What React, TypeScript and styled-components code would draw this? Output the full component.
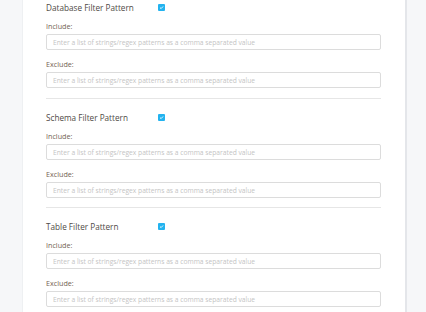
import React from "react";
import styled, { createGlobalStyle } from "styled-components";

const GlobalStyle = createGlobalStyle`
  html, body {
    margin: 0;
    padding: 0;
    background: #f6f7f9;
    font-family: "Open Sans", "Liberation Sans", sans-serif;
  }
`;

const Page = styled.div`
  display: flex;
  height: 312px;
  overflow: hidden;
`;

const Card = styled.div`
  margin-left: 22px;
  width: 335px;
  padding: 0 24px 0 23px;
  background: #ffffff;
  border-left: 1px solid #eef0f2;
  border-right: 2px solid #e4e6ea;
`;

const Section = styled.div`
  padding: 11px 0 9px;
  border-bottom: 1px solid #e6e6e6;

  &:first-child {
    padding-top: 0;
    padding-bottom: 10px;
  }
`;

const Header = styled.div`
  display: flex;
  align-items: center;
  height: 14px;
  margin-bottom: 6px;
`;

const Title = styled.div`
  width: 112px;
  font-size: 8.2px;
  color: #4f4a46;
`;

const Check = styled.span`
  display: inline-flex;
  align-items: center;
  justify-content: center;
  width: 7px;
  height: 7px;
  border-radius: 1px;
  background: #23b3ef;
`;

const Field = styled.div`
  & + & {
    margin-top: 8px;
  }
`;

const Label = styled.div`
  font-size: 7.2px;
  line-height: 12px;
  margin-bottom: 2px;
  color: #735f52;
`;

const Input = styled.input`
  display: block;
  box-sizing: border-box;
  width: 100%;
  height: 16px;
  margin: 0;
  padding: 0 6px;
  border: 1px solid #dcdcdc;
  border-radius: 2px;
  background: #fff;
  font-family: "Open Sans", "Liberation Sans", sans-serif;
  font-size: 6.7px;
  outline: none;

  &::placeholder {
    color: #c4c4c4;
  }
`;

const CheckMark = () => (
  <svg width="5" height="5" viewBox="0 0 10 10">
    <path d="M2 5.2 L4.2 7.2 L8 3" fill="none" stroke="#fff" strokeWidth="1.8" />
  </svg>
);

const placeholder = "Enter a list of strings/regex patterns as a comma separated value";

const FilterSection: React.FC<{ title: string }> = ({ title }) => (
  <Section>
    <Header>
      <Title>{title}</Title>
      <Check>
        <CheckMark />
      </Check>
    </Header>
    <Field>
      <Label>Include:</Label>
      <Input placeholder={placeholder} />
    </Field>
    <Field>
      <Label>Exclude:</Label>
      <Input placeholder={placeholder} />
    </Field>
  </Section>
);

export default function App() {
  return (
    <Page>
      <GlobalStyle />
      <Card>
        <FilterSection title="Database Filter Pattern" />
        <FilterSection title="Schema Filter Pattern" />
        <FilterSection title="Table Filter Pattern" />
      </Card>
    </Page>
  );
}
